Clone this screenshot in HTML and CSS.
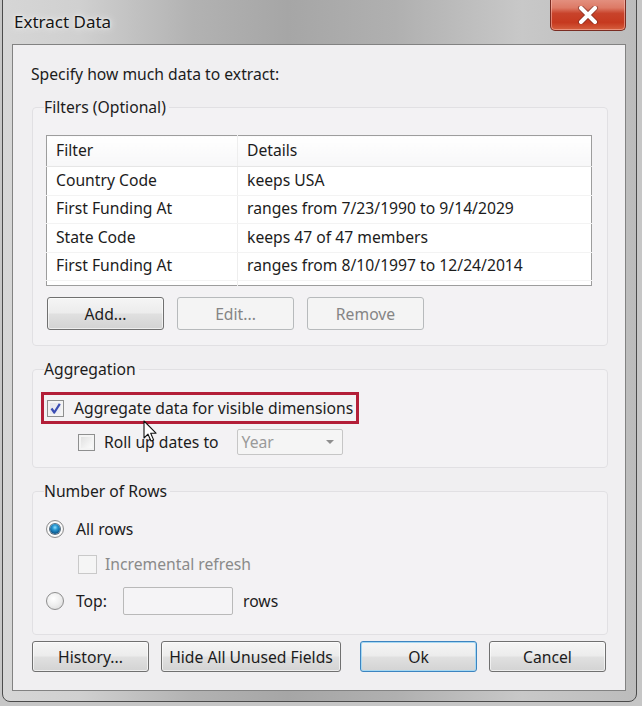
FILE: index.html
```html
<!DOCTYPE html>
<html>
<head>
<meta charset="utf-8">
<link rel="stylesheet" href="styles.css">
</head>
<body>
<div class="window">
  <div class="titlebar">
    <span class="title">Extract Data</span>
    <div class="close">
      <svg width="22" height="18" viewBox="0 0 22 18"><path d="M4 2 L18 16 M18 2 L4 16" stroke="#6a2a22" stroke-width="6" stroke-linecap="round" opacity="0.55"/><path d="M4 2 L18 16 M18 2 L4 16" stroke="#fff" stroke-width="4" stroke-linecap="round"/></svg>
    </div>
  </div>
  <div class="client">
    <div class="intro">Specify how much data to extract:</div>

    <fieldset class="group filters">
      <legend>Filters (Optional)</legend>
      <table class="grid">
        <thead>
          <tr><th class="c1">Filter</th><th>Details</th></tr>
        </thead>
        <tbody>
          <tr><td class="c1">Country Code</td><td>keeps USA</td></tr>
          <tr><td class="c1">First Funding At</td><td>ranges from 7/23/1990 to 9/14/2029</td></tr>
          <tr><td class="c1">State Code</td><td>keeps 47 of 47 members</td></tr>
          <tr><td class="c1">First Funding At</td><td>ranges from 8/10/1997 to 12/24/2014</td></tr>
          <tr class="filler"><td class="c1"></td><td></td></tr>
        </tbody>
      </table>
      <div class="btnrow">
        <button class="btn">Add...</button>
        <button class="btn" disabled>Edit...</button>
        <button class="btn" disabled>Remove</button>
      </div>
    </fieldset>

    <fieldset class="group aggregation">
      <legend>Aggregation</legend>
      <div class="highlight">
        <span class="check checked"><svg width="15" height="15" viewBox="0 0 15 15"><path d="M3.5 7.5 L6.3 11.5 L11.8 2.8" fill="none" stroke="#3b4db3" stroke-width="2.2" stroke-linejoin="round"/></svg></span>
        <span class="label">Aggregate data for visible dimensions</span>
      </div>
      <div class="rollup">
        <span class="check"></span>
        <span class="label">Roll up dates to</span>
        <div class="select"><span>Year</span><span class="arrow"></span></div>
      </div>
    </fieldset>

    <fieldset class="group rows">
      <legend>Number of Rows</legend>
      <div class="optrow">
        <span class="radio on"><span class="dot"></span></span>
        <span class="label">All rows</span>
      </div>
      <div class="incr">
        <span class="check disabled"></span>
        <span class="label dim">Incremental refresh</span>
      </div>
      <div class="toprow">
        <span class="radio"></span>
        <span class="label">Top:</span>
        <span class="input"></span>
        <span class="label">rows</span>
      </div>
    </fieldset>

    <div class="footer">
      <button class="btn">History...</button>
      <button class="btn wide">Hide All Unused Fields</button>
      <button class="btn ok">Ok</button>
      <button class="btn">Cancel</button>
    </div>
  </div>
  <svg class="cursor" width="16" height="24" viewBox="0 0 16 24"><path d="M1 1 L1 18 L5 14.2 L8 21 L10.6 19.9 L7.7 13.2 L13 13.2 Z" fill="#fff" stroke="#111" stroke-width="1.1" stroke-linejoin="round"/></svg>
</div>
</body>
</html>
```
FILE: styles.css
```css
html, body {
  margin: 0;
  padding: 0;
}
body {
  background: #c6c6c6;
  width: 642px;
  height: 706px;
  overflow: hidden;
  font-family: "Noto Sans", "Liberation Sans", sans-serif;
  font-size: 15.7px;
  color: #1c1c1c;
}
.window {
  position: relative;
  width: 635px;
  margin: -8px 0 0 2px;
  border: 1px solid #4b4b4b;
  border-radius: 8px;
  background: linear-gradient(90deg, #d6d6d6 0%, #d0d0d0 12%, #b2b2b2 30%, #a6a6a6 45%, #b0b0b0 62%, #c8c8c8 82%, #bcbcbc 100%);
  box-sizing: border-box;
}
.titlebar {
  height: 51px;
  display: flex;
  justify-content: space-between;
  align-items: flex-start;
  padding: 0 10px 0 11px;
  box-sizing: border-box;
}
.title {
  margin-top: 17px;
  font-size: 17px;
  line-height: 24px;
  color: #161616;
  text-shadow: 0 0 8px rgba(255,255,255,0.9), 0 0 3px rgba(255,255,255,0.9);
}
.close {
  width: 76px;
  height: 38px;
  box-sizing: border-box;
  border: 1px solid #7a2c22;
  border-top: none;
  border-radius: 0 0 5px 5px;
  background: linear-gradient(180deg, #e8a294 0%, #dd7a66 40%, #c8432b 55%, #c6391f 80%, #d5603f 100%);
  box-shadow: inset 0 0 0 1px rgba(255,200,190,0.5);
  display: flex;
  align-items: center;
  justify-content: center;
  padding-top: 6px;
}
.client {
  margin: 0 10px 10px 9px;
  border: 1px solid #828282;
  background: #f0eff1;
  padding: 19px 17px 18px 19px;
}
.intro {
  line-height: 20px;
  margin-left: -1px;
}
.group {
  margin: 0;
  min-inline-size: 0;
  border: 1px solid #e1e0e3;
  border-radius: 4px;
  background: #f3f2f4;
  padding: 0;
}
.group legend {
  padding: 0 3px 0 0;
  line-height: 20px;
}
.filters {
  margin-top: 13px;
  padding: 18px 15px 15px 13px;
}
.filters legend,
.rows legend {
  margin-left: -2px;
}
.aggregation legend {
  margin-left: 3px;
}
.grid {
  width: 546px;
  border-collapse: collapse;
  border: 1px solid #9d9d9d;
  background: #fff;
}
.grid th, .grid td {
  text-align: left;
  font-weight: normal;
  padding: 0 0 2px 9px;
  white-space: nowrap;
  line-height: 18px;
}
.grid th {
  height: 28px;
  border-bottom: 1px solid #e6e6e6;
  background: linear-gradient(#ffffff, #f7f7f8);
}
.grid td {
  height: 25.5px;
  border-bottom: 1px solid #f3f3f3;
}
.grid .c1 {
  width: 181px;
  border-right: 1px solid #eeeeee;
}
.grid tr.filler td {
  height: 4px;
  padding: 0;
  border-bottom: none;
}
.btnrow {
  display: flex;
  gap: 13px;
  margin-top: 11px;
  padding-left: 1px;
}
.btn {
  font-family: inherit;
  font-size: 15.7px;
  color: #1c1c1c;
  width: 117px;
  height: 33px;
  padding: 0;
  border: 1px solid #707070;
  border-radius: 3px;
  background: linear-gradient(180deg, #f5f5f5 0%, #ececec 48%, #e0e0e0 52%, #d3d3d3 100%);
  box-shadow: inset 0 0 0 1px rgba(255,255,255,0.6);
}
.btn:disabled {
  color: #858585;
  border-color: #b7babc;
  background: #f4f4f4;
  box-shadow: none;
}
.aggregation {
  margin-top: 13px;
  padding: 13px 0 12px 8px;
}
.highlight {
  width: 318px;
  height: 32px;
  box-sizing: border-box;
  border: 3px solid #b31e38;
  display: flex;
  align-items: center;
  padding-left: 3px;
}
.check {
  width: 17px;
  height: 17px;
  box-sizing: border-box;
  border: 1px solid #8e8f8f;
  background: linear-gradient(135deg, #dcdcdc 0%, #f2f2f2 60%, #ffffff 100%);
  box-shadow: inset 0 0 0 2px #f4f4f4;
  display: flex;
  align-items: center;
  justify-content: center;
  flex: none;
}
.check.checked {
  background: linear-gradient(135deg, #e2e2ea 0%, #f4f4f8 100%);
}
.check.disabled {
  width: 19px;
  height: 19px;
  border-color: #c9c9c9;
  background: #f5f5f5;
  box-shadow: none;
}
.highlight .label {
  margin-left: 10px;
}
.rollup {
  display: flex;
  align-items: center;
  margin-top: 5px;
  padding-left: 37px;
  height: 26px;
}
.rollup .label {
  margin-left: 9px;
}
.select {
  margin-left: 18px;
  width: 106px;
  height: 26px;
  box-sizing: border-box;
  border: 1px solid #c6c6c6;
  border-radius: 2px;
  background: #f5f5f5;
  color: #9a9a9a;
  display: flex;
  align-items: center;
  justify-content: space-between;
  padding: 0 8px 0 4px;
}
.arrow {
  width: 0;
  height: 0;
  border-left: 4px solid transparent;
  border-right: 4px solid transparent;
  border-top: 4px solid #8f8f8f;
}
.rows {
  margin-top: 13px;
  padding: 18px 0 19px 13px;
}
.optrow, .toprow, .incr {
  display: flex;
  align-items: center;
}
.optrow {
  height: 20px;
}
.radio {
  width: 18px;
  height: 18px;
  box-sizing: border-box;
  border-radius: 50%;
  border: 1px solid #8d8d8d;
  background: radial-gradient(circle at 40% 35%, #ffffff 0%, #eeeeee 50%, #d4d4d4 100%);
  display: flex;
  align-items: center;
  justify-content: center;
  flex: none;
}
.radio .dot {
  width: 10px;
  height: 10px;
  border-radius: 50%;
  background: radial-gradient(circle at 50% 35%, #8fe0ff 0%, #2a9ad4 30%, #0c5a90 70%, #072f55 100%);
  box-shadow: 0 0 0 1px #5a6f80;
}
.radio.on {
  background: radial-gradient(circle, #ffffff 55%, #d8d8d8 100%);
}
.optrow .label, .toprow > .label:nth-child(2) {
  margin-left: 12px;
}
.incr {
  height: 20px;
  margin-top: 15px;
  padding-left: 32px;
}
.incr .label {
  margin-left: 8px;
}
.dim {
  color: #8a8a8a;
}
.toprow {
  margin-top: 13px;
  height: 28px;
}
.input {
  width: 110px;
  height: 28px;
  box-sizing: border-box;
  margin-left: 16px;
  border: 1px solid #b9b9b9;
  border-radius: 2px;
  background: #f5f4f6;
}
.toprow .input + .label {
  margin-left: 10px;
}
.footer {
  display: flex;
  margin-top: 6px;
  margin-left: 0;
}
.footer .btn {
  height: 31px;
}
.footer .btn + .btn {
  margin-left: 12px;
}
.footer .wide {
  width: 180px;
}
.footer .btn.ok {
  margin-left: 19px;
  border-color: #3c84c0;
  box-shadow: inset 0 0 0 1px #a6d8f2;
}
.cursor {
  position: absolute;
  left: 140px;
  top: 427px;
}
```
